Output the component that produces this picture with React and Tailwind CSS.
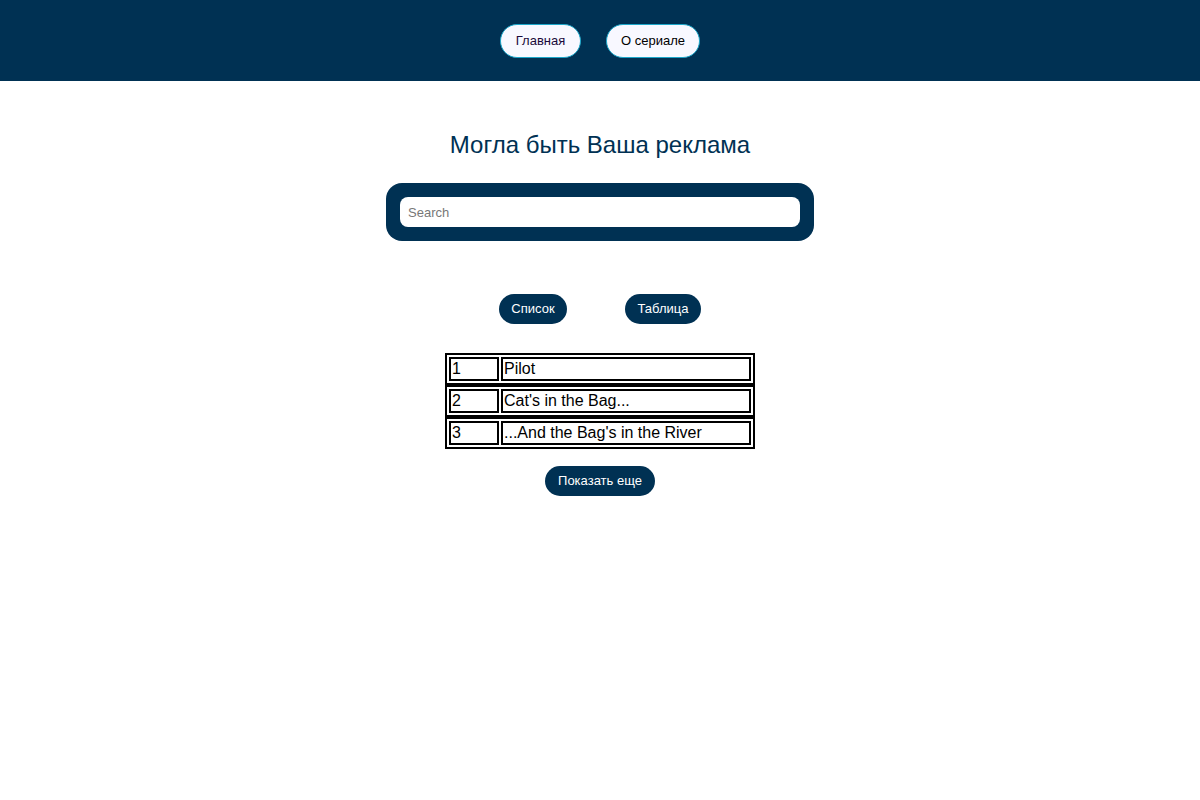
export default function App() {
  const rows = [
    [1, "Pilot"],
    [2, "Cat's in the Bag..."],
    [3, "...And the Bag's in the River"],
  ];
  return (
    <div className="min-h-[800px] bg-white font-['Liberation_Sans',Arial,sans-serif]">
      <header className="h-[81px] bg-[#003153] flex items-center justify-center gap-[25px] pt-[1px]">
        <button className="h-[34px] w-[81px] rounded-full border border-[#1ba6c9] bg-[#f8f8ff] text-[13px] text-[#1a0a3a]">
          Главная
        </button>
        <button className="h-[34px] w-[94px] rounded-full border border-[#1ba6c9] bg-[#f8f8ff] text-[13px] text-black">
          О сериале
        </button>
      </header>
      <main className="flex flex-col items-center">
        <h1 className="mt-[50px] h-[28px] text-[24px] leading-[28px] text-[#003153]">
          Могла быть Ваша реклама
        </h1>
        <div className="mt-[24px] w-[428px] h-[58px] rounded-[16px] bg-[#003153] p-[14px]">
          <input
            className="w-[400px] h-[30px] rounded-[8px] bg-white px-[8px] text-[13px] outline-none placeholder:text-[#777]"
            placeholder="Search"
          />
        </div>
        <div className="mt-[53px] flex gap-[58px]">
          <button className="h-[30px] w-[68px] rounded-full bg-[#003153] text-[13px] text-white">
            Список
          </button>
          <button className="h-[30px] w-[76px] rounded-full bg-[#003153] text-[13px] text-white">
            Таблица
          </button>
        </div>
        <div className="mt-[29px] flex flex-col w-[310px]">
          {rows.map(([n, t]) => (
            <div key={n} className="flex gap-[2px] border-2 border-black p-[2px] text-[16px] leading-[18px] text-black">
              <div className="w-[50px] h-[24px] border-2 border-black px-[1px] pt-[1px]">{n}</div>
              <div className="w-[250px] h-[24px] border-2 border-black px-[1px] pt-[1px]">{t}</div>
            </div>
          ))}
        </div>
        <button className="mt-[17px] h-[30px] w-[110px] rounded-full bg-[#003153] text-[13px] text-white">
          Показать еще
        </button>
      </main>
    </div>
  );
}
